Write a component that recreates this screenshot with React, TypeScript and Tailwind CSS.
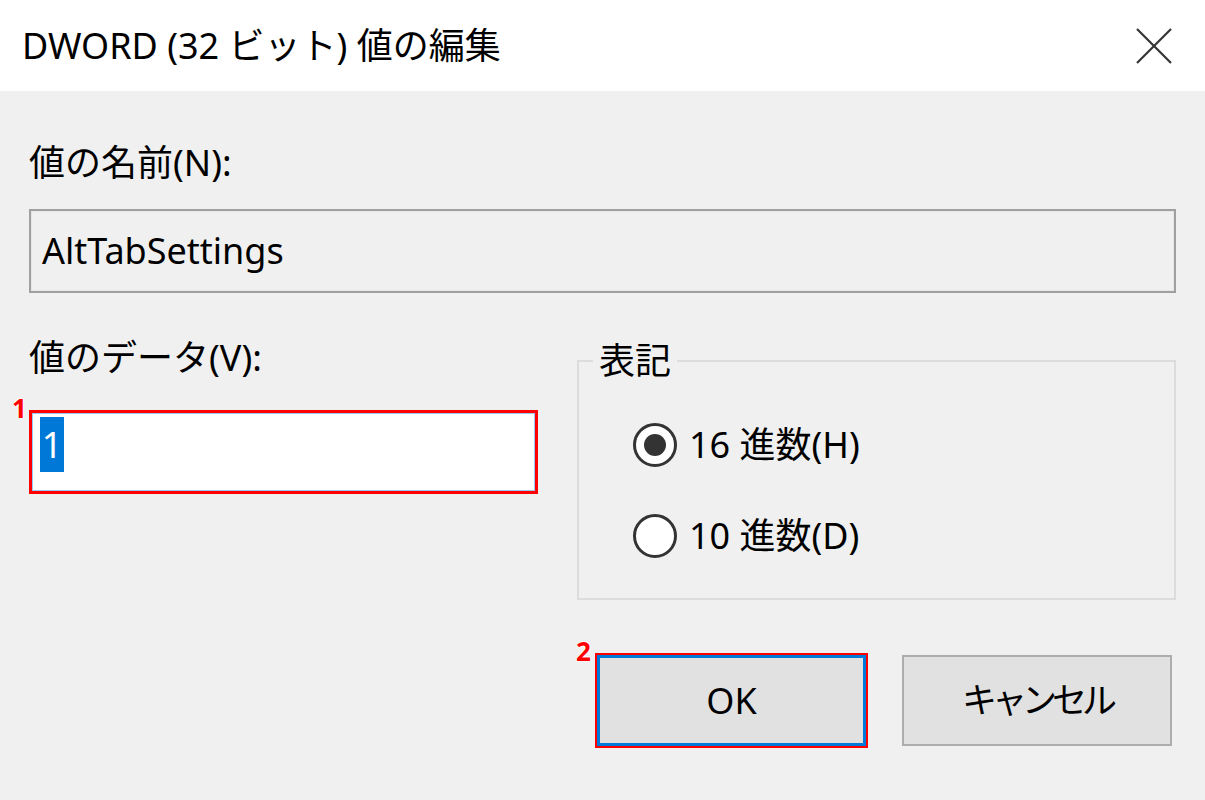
import React from "react";

const font = { fontFamily: '"Noto Sans", "Noto Sans CJK JP", sans-serif' };

const Radio: React.FC<{ checked?: boolean; label: string }> = ({ checked, label }) => (
  <div className="flex items-center h-[48px]">
    <span className="w-[44px] h-[44px] rounded-full border-[3px] border-[#333333] bg-white flex items-center justify-center">
      {checked && <span className="w-[22px] h-[22px] rounded-full bg-[#333333]" />}
    </span>
    <span className="ml-[12px] text-[36px] leading-[48px] text-black">{label}</span>
  </div>
);

export default function App() {
  return (
    <div className="w-[1205px] h-[800px] bg-[#f0f0f0] flex flex-col overflow-hidden" style={font}>
      {/* Title bar */}
      <div className="h-[91px] bg-white flex items-center justify-between pl-[22px] pr-[33px]">
        <span className="text-[36px] text-black leading-none">DWORD (32 ビット) 値の編集</span>
        <svg width="36" height="36" viewBox="0 0 36 36">
          <line x1="1" y1="1" x2="35" y2="35" stroke="#333" strokeWidth="2.2" />
          <line x1="35" y1="1" x2="1" y2="35" stroke="#333" strokeWidth="2.2" />
        </svg>
      </div>

      {/* Body */}
      <div className="flex flex-col px-[29px]">
        <div className="mt-[48px] text-[36px] leading-[48px] text-black">値の名前(N):</div>
        <div className="mt-[22px] h-[84px] border-2 border-[#a0a0a0] bg-[#f0f0f0] shadow-[inset_0_0_0_1px_#e6e6e6] flex items-center pl-[11px]">
          <span className="text-[36px] leading-none text-black">AltTabSettings</span>
        </div>

        <div className="flex mt-[48px] gap-[39px]">
          {/* Value data */}
          <div className="w-[509px] flex flex-col">
            <div className="mt-[-7px] text-[36px] leading-[48px] text-black">値のデータ(V):</div>
            <div className="relative mt-[28px] h-[84px] border-[3px] border-[#ff0000] bg-white">
              <span className="absolute -left-[20px] -top-[18px] text-[26px] font-bold leading-none text-[#ff0000] [text-shadow:0_0_2px_#fff,0_0_2px_#fff,0_0_2px_#fff]">
                1
              </span>
              <div className="h-full border border-[#99c9ef] pl-[7px] pt-[3px]">
                <span className="inline-flex items-center justify-center w-[24px] h-[55px] bg-[#0078d7] text-white text-[36px] leading-none">
                  1
                </span>
              </div>
            </div>
          </div>

          {/* Notation group */}
          <fieldset className="flex-1 h-[259px] border-2 border-[#dcdcdc]">
            <legend className="ml-[14px] px-[6px] text-[36px] leading-[40px] text-black">表記</legend>
            <div className="mt-[40px] pl-[54px] flex flex-col gap-[43px]">
              <Radio checked label="16 進数(H)" />
              <Radio label="10 進数(D)" />
            </div>
          </fieldset>
        </div>

        {/* Buttons */}
        <div className="flex justify-end gap-[34px] mt-[55px] pr-[4px]">
          <div className="relative mt-[-2px] border-2 border-[#ff0000]">
            <span className="absolute -left-[21px] -top-[17px] text-[26px] font-bold leading-none text-[#ff0000] [text-shadow:0_0_2px_#fff,0_0_2px_#fff,0_0_2px_#fff]">
              2
            </span>
            <button className="w-[269px] h-[91px] border-[3px] border-[#0078d7] bg-[#e1e1e1] text-[36px] text-black flex items-center justify-center">
              OK
            </button>
          </div>
          <button className="w-[270px] h-[91px] border-2 border-[#adadad] bg-[#e1e1e1] text-[35px] tracking-[-5px] text-black flex items-center justify-center">
            キャンセル
          </button>
        </div>
      </div>
    </div>
  );
}
